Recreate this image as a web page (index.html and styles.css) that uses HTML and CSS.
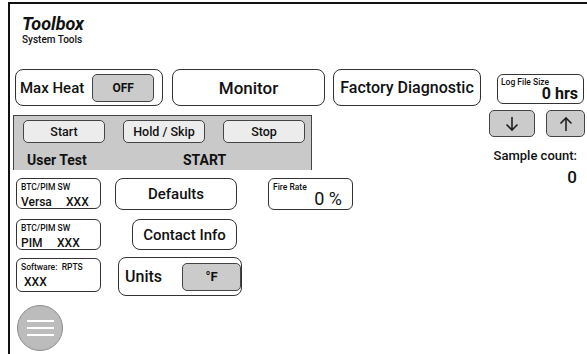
FILE: index.html
```html
<!DOCTYPE html>
<html>
<head>
<meta charset="utf-8">
<link rel="stylesheet" href="styles.css">
</head>
<body>
<div class="frame">
  <div class="header">
    <div class="title">Toolbox</div>
    <div class="subtitle">System Tools</div>
  </div>
  <div class="main">
    <div class="left">
      <div class="row1">
        <div class="box maxheat">
          <span class="lbl">Max Heat</span>
          <div class="gbtn offbtn">OFF</div>
        </div>
        <div class="box monitor">Monitor</div>
        <div class="box factory">Factory Diagnostic</div>
      </div>
      <div class="panel">
        <div class="prow">
          <div class="pbtn">Start</div>
          <div class="pbtn">Hold / Skip</div>
          <div class="pbtn">Stop</div>
        </div>
        <div class="pstatus">
          <span class="ut">User Test</span>
          <span class="st">START</span>
        </div>
      </div>
      <div class="rowa">
        <div class="info">
          <div class="ilbl">BTC/PIM SW</div>
          <div class="ival"><span class="k1">Versa</span>XXX</div>
        </div>
        <div class="box defaults">Defaults</div>
        <div class="info fire">
          <div class="ilbl">Fire Rate</div>
          <div class="fval">0 %</div>
        </div>
      </div>
      <div class="rowb">
        <div class="info">
          <div class="ilbl">BTC/PIM SW</div>
          <div class="ival"><span class="k2">PIM</span>XXX</div>
        </div>
        <div class="box contact">Contact Info</div>
      </div>
      <div class="rowc">
        <div class="info soft">
          <div class="ilbl">Software:&nbsp;&nbsp;RPTS</div>
          <div class="ival xxx">XXX</div>
        </div>
        <div class="box units">
          <span class="lbl">Units</span>
          <div class="gbtn fbtn">°F</div>
        </div>
      </div>
      <div class="menu">
        <span></span><span></span><span></span>
      </div>
    </div>
    <div class="right">
      <div class="info logbox">
        <div class="ilbl">Log File Size</div>
        <div class="lval">0 hrs</div>
      </div>
      <div class="arrows">
        <div class="gbtn arrow down">
          <svg width="14" height="16" viewBox="0 0 14 16"><path d="M7 1 V14 M1.5 8.5 L7 14 L12.5 8.5" fill="none" stroke="#222" stroke-width="1.6"/></svg>
        </div>
        <div class="gbtn arrow up">
          <svg width="14" height="16" viewBox="0 0 14 16"><path d="M7 15 V2 M1.5 7.5 L7 2 L12.5 7.5" fill="none" stroke="#222" stroke-width="1.6"/></svg>
        </div>
      </div>
      <div class="sample">
        <div class="slbl">Sample count:</div>
        <div class="sval">0</div>
      </div>
    </div>
  </div>
</div>
</body>
</html>
```
FILE: styles.css
```css
* { box-sizing: border-box; }
html, body { margin: 0; padding: 0; background: #fff; overflow: hidden; }
body {
  font-family: Roboto, "Liberation Sans", sans-serif;
  color: #111;
  width: 587px;
  height: 354px;
}
.frame {
  margin: 2px 0 0 8px;
  border-left: 2px solid #111;
  border-top: 2px solid #111;
  height: 352px;
}
.header { padding: 9px 0 0 12px; }
.title {
  font-size: 18px;
  line-height: 21px;
  font-weight: 700;
  font-style: italic;
}
.subtitle {
  font-size: 10px;
  line-height: 12px;
  font-weight: 500;
}
.main {
  display: flex;
  margin-top: 23px;
}
.left { width: 479px; }
.right { width: 96px; }

.box {
  border: 1px solid #333;
  border-radius: 8px;
  background: #fff;
  display: flex;
  align-items: center;
  justify-content: center;
  font-weight: 500;
}
.row1 {
  display: flex;
  margin-left: 5px;
  gap: 9px;
}
.row1 .box { height: 37px; }
.maxheat {
  width: 148px;
  justify-content: flex-start;
  padding-left: 4px;
}
.lbl { font-size: 15px; font-weight: 500; }
.gbtn {
  background: #cbcbcb;
  border: 1px solid #444;
  border-radius: 5px;
  display: flex;
  align-items: center;
  justify-content: center;
  font-weight: 700;
  font-size: 12px;
}
.offbtn { width: 62px; height: 28px; margin-left: 8px; }
.monitor { width: 153px; font-size: 17px; }
.factory { width: 148px; font-size: 16px; margin-left: -1px; }

.panel {
  margin: 9px 0 0 3px;
  width: 299px;
  height: 55px;
  background: #c9c9c9;
  border: 1px solid #444;
  border-bottom: none;
  padding: 4px 0 0 9px;
}
.prow { display: flex; gap: 18px; }
.pbtn {
  width: 82px;
  height: 23px;
  background: #ececec;
  border: 1px solid #444;
  border-radius: 5px;
  display: flex;
  align-items: center;
  justify-content: center;
  font-size: 12.5px;
  font-weight: 500;
}
.pstatus {
  display: flex;
  font-size: 14px;
  font-weight: 700;
  line-height: 16px;
  margin-top: 9px;
  padding-left: 4px;
}
.ut { width: 156px; }

.info {
  border: 1px solid #333;
  border-radius: 6px;
  background: #fff;
  width: 85px;
  height: 31px;
  padding: 3px 0 0 4px;
}
.ilbl { font-size: 8.5px; line-height: 10px; font-weight: 500; }
.ival { font-size: 12px; line-height: 14px; font-weight: 500; margin-top: 3px; }
.k1 { display: inline-block; width: 45px; }
.k2 { display: inline-block; width: 36px; }
.xxx { padding-left: 3px; }
.fval { font-size: 18px; line-height: 18px; text-align: right; padding-right: 10px; margin-top: -2px; }
.lval { font-size: 16px; line-height: 16px; font-weight: 700; text-align: right; padding-right: 5px; margin-top: -1px; }

.rowa { display: flex; margin: 8px 0 0 6px; align-items: flex-start; }
.defaults { width: 122px; height: 32px; margin-left: 14px; font-size: 15px; }
.fire { height: 32px; margin-left: 31px; }

.rowb { display: flex; margin: 9px 0 0 6px; }
.contact { width: 105px; height: 31px; margin-left: 31px; font-size: 15px; }

.rowc { display: flex; margin: 7px 0 0 6px; align-items: flex-start; }
.soft { height: 34px; margin-top: 1px; }
.units {
  width: 124px;
  height: 39px;
  margin-left: 17px;
  justify-content: flex-start;
  padding-left: 6px;
}
.units .lbl { font-size: 16px; }
.fbtn { width: 62px; height: 28px; margin-left: 20px; font-size: 13px; }

.menu {
  width: 46px;
  height: 46px;
  border-radius: 50%;
  background: #bcbcbc;
  border: 1px solid #8a8a8a;
  margin: 9px 0 0 7px;
  display: flex;
  flex-direction: column;
  justify-content: center;
  align-items: center;
  gap: 5px;
}
.menu span {
  display: block;
  width: 27px;
  height: 2px;
  background: #fff;
}

.logbox { width: 87px; height: 30px; margin: 5px 0 0 8px; padding: 2px 0 0 3px; }
.logbox .ilbl { font-size: 8.5px; }
.arrows { display: flex; gap: 11px; margin-top: 6px; }
.arrow { height: 27px; }
.down { width: 46px; }
.up { width: 39px; }
.sample {
  text-align: right;
  padding-right: 8px;
  margin-top: 11px;
}
.slbl { font-size: 13px; font-weight: 500; line-height: 16px; }
.sval { font-size: 17px; font-weight: 500; line-height: 20px; margin-top: 3px; }
```
